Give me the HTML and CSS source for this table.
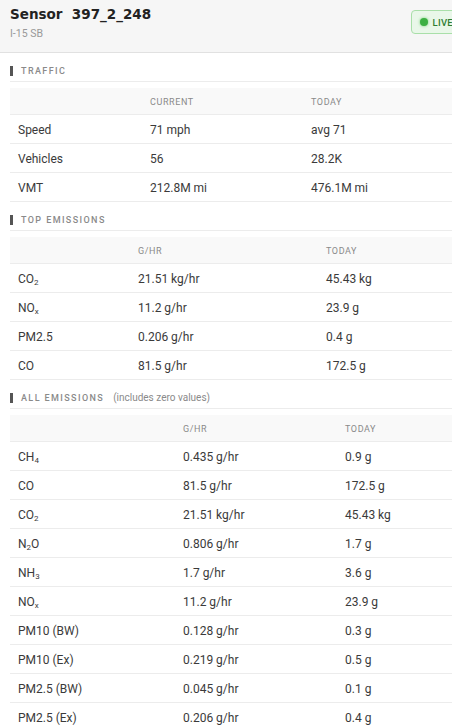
FILE: index.html
```html
<!DOCTYPE html>
<html>
<head>
<meta charset="utf-8">
<link rel="stylesheet" href="styles.css">
</head>
<body>
<div class="panel">
  <header class="head">
    <div class="head-text">
      <div class="title">Sensor&nbsp; 397_2_248</div>
      <div class="sub">I-15 SB</div>
    </div>
    <div class="badge"><span class="dot"></span>LIVE</div>
  </header>

  <section class="sec">
    <div class="sec-title"><span class="bar"></span>TRAFFIC</div>
    <div class="tbl t-traffic">
      <div class="row hrow"><span></span><span>CURRENT</span><span>TODAY</span></div>
      <div class="row"><span>Speed</span><span>71 mph</span><span>avg 71</span></div>
      <div class="row"><span>Vehicles</span><span>56</span><span>28.2K</span></div>
      <div class="row"><span>VMT</span><span>212.8M mi</span><span>476.1M mi</span></div>
    </div>
  </section>

  <section class="sec">
    <div class="sec-title"><span class="bar"></span>TOP EMISSIONS</div>
    <div class="tbl t-top">
      <div class="row hrow"><span></span><span>G/HR</span><span>TODAY</span></div>
      <div class="row"><span>CO<span class="sb">2</span></span><span>21.51 kg/hr</span><span>45.43 kg</span></div>
      <div class="row"><span>NO<span class="sb">x</span></span><span>11.2 g/hr</span><span>23.9 g</span></div>
      <div class="row"><span>PM2.5</span><span>0.206 g/hr</span><span>0.4 g</span></div>
      <div class="row"><span>CO</span><span>81.5 g/hr</span><span>172.5 g</span></div>
    </div>
  </section>

  <section class="sec">
    <div class="sec-title"><span class="bar"></span>ALL EMISSIONS <span class="note">(includes zero values)</span></div>
    <div class="tbl t-all">
      <div class="row hrow"><span></span><span>G/HR</span><span>TODAY</span></div>
      <div class="row"><span>CH<span class="sb">4</span></span><span>0.435 g/hr</span><span>0.9 g</span></div>
      <div class="row"><span>CO</span><span>81.5 g/hr</span><span>172.5 g</span></div>
      <div class="row"><span>CO<span class="sb">2</span></span><span>21.51 kg/hr</span><span>45.43 kg</span></div>
      <div class="row"><span>N<span class="sb">2</span>O</span><span>0.806 g/hr</span><span>1.7 g</span></div>
      <div class="row"><span>NH<span class="sb">3</span></span><span>1.7 g/hr</span><span>3.6 g</span></div>
      <div class="row"><span>NO<span class="sb">x</span></span><span>11.2 g/hr</span><span>23.9 g</span></div>
      <div class="row"><span>PM10 (BW)</span><span>0.128 g/hr</span><span>0.3 g</span></div>
      <div class="row"><span>PM10 (Ex)</span><span>0.219 g/hr</span><span>0.5 g</span></div>
      <div class="row"><span>PM2.5 (BW)</span><span>0.045 g/hr</span><span>0.1 g</span></div>
      <div class="row"><span>PM2.5 (Ex)</span><span>0.206 g/hr</span><span>0.4 g</span></div>
    </div>
  </section>
</div>
</body>
</html>
```

FILE: styles.css
```css
html, body {
  margin: 0;
  padding: 0;
  overflow: hidden;
  background: #fff;
}
body {
  font-family: Roboto, "Liberation Sans", sans-serif;
  font-size: 12px;
  color: #3a3a3a;
}
.panel {
  width: 472px;
}
.head {
  display: flex;
  justify-content: space-between;
  align-items: flex-start;
  padding: 5px 10px 0 10px;
  height: 47px;
  background: #f6f6f6;
  border-bottom: 1px solid #e1e1e1;
}
.title {
  font-family: "DejaVu Sans", Verdana, sans-serif;
  font-weight: bold;
  font-size: 13.5px;
  line-height: 18px;
  color: #222;
}
.sub {
  margin-top: 5px;
  font-size: 10.5px;
  line-height: 12px;
  color: #999;
}
.badge {
  margin-top: 5px;
  display: flex;
  align-items: center;
  gap: 4px;
  height: 22px;
  padding: 0 8px;
  border: 1px solid #a9dfa9;
  border-radius: 4px;
  background: #e9f7e9;
  color: #2e7d32;
  font-size: 9.5px;
  font-weight: 500;
  letter-spacing: 0.3px;
}
.dot {
  width: 8px;
  height: 8px;
  border-radius: 50%;
  background: #3cb043;
  box-shadow: 0 0 3px #6fd06f;
}
.sec {
  padding: 0 10px;
}
.sec-title {
  display: flex;
  align-items: center;
  padding: 12px 0 4px 0;
  line-height: 12px;
  font-size: 9px;
  font-weight: 500;
  letter-spacing: 1.4px;
  color: #8a8a8a;
  border-bottom: 1px solid #ececec;
}
.bar {
  width: 3px;
  height: 10px;
  background: #555;
  margin-right: 8px;
}
.note {
  margin-left: 9px;
  font-size: 10px;
  font-weight: normal;
  letter-spacing: 0;
  color: #8a8a8a;
}
.tbl {
  margin-top: 6px;
}
.row {
  display: grid;
  align-items: center;
  padding: 2px 0 0 8px;
  height: 26px;
  border-bottom: 1px solid #ececec;
}
.hrow {
  height: 24px;
  background: #f9f9f9;
  font-size: 9px;
  letter-spacing: 0.6px;
  color: #8a8a8a;
}
.sb {
  font-size: 8px;
  position: relative;
  top: 2px;
}
.t-traffic .row { grid-template-columns: 132px 161px 1fr; }
.t-top .row { grid-template-columns: 120px 188px 1fr; }
.t-all .row { grid-template-columns: 165px 162px 1fr; }
```
